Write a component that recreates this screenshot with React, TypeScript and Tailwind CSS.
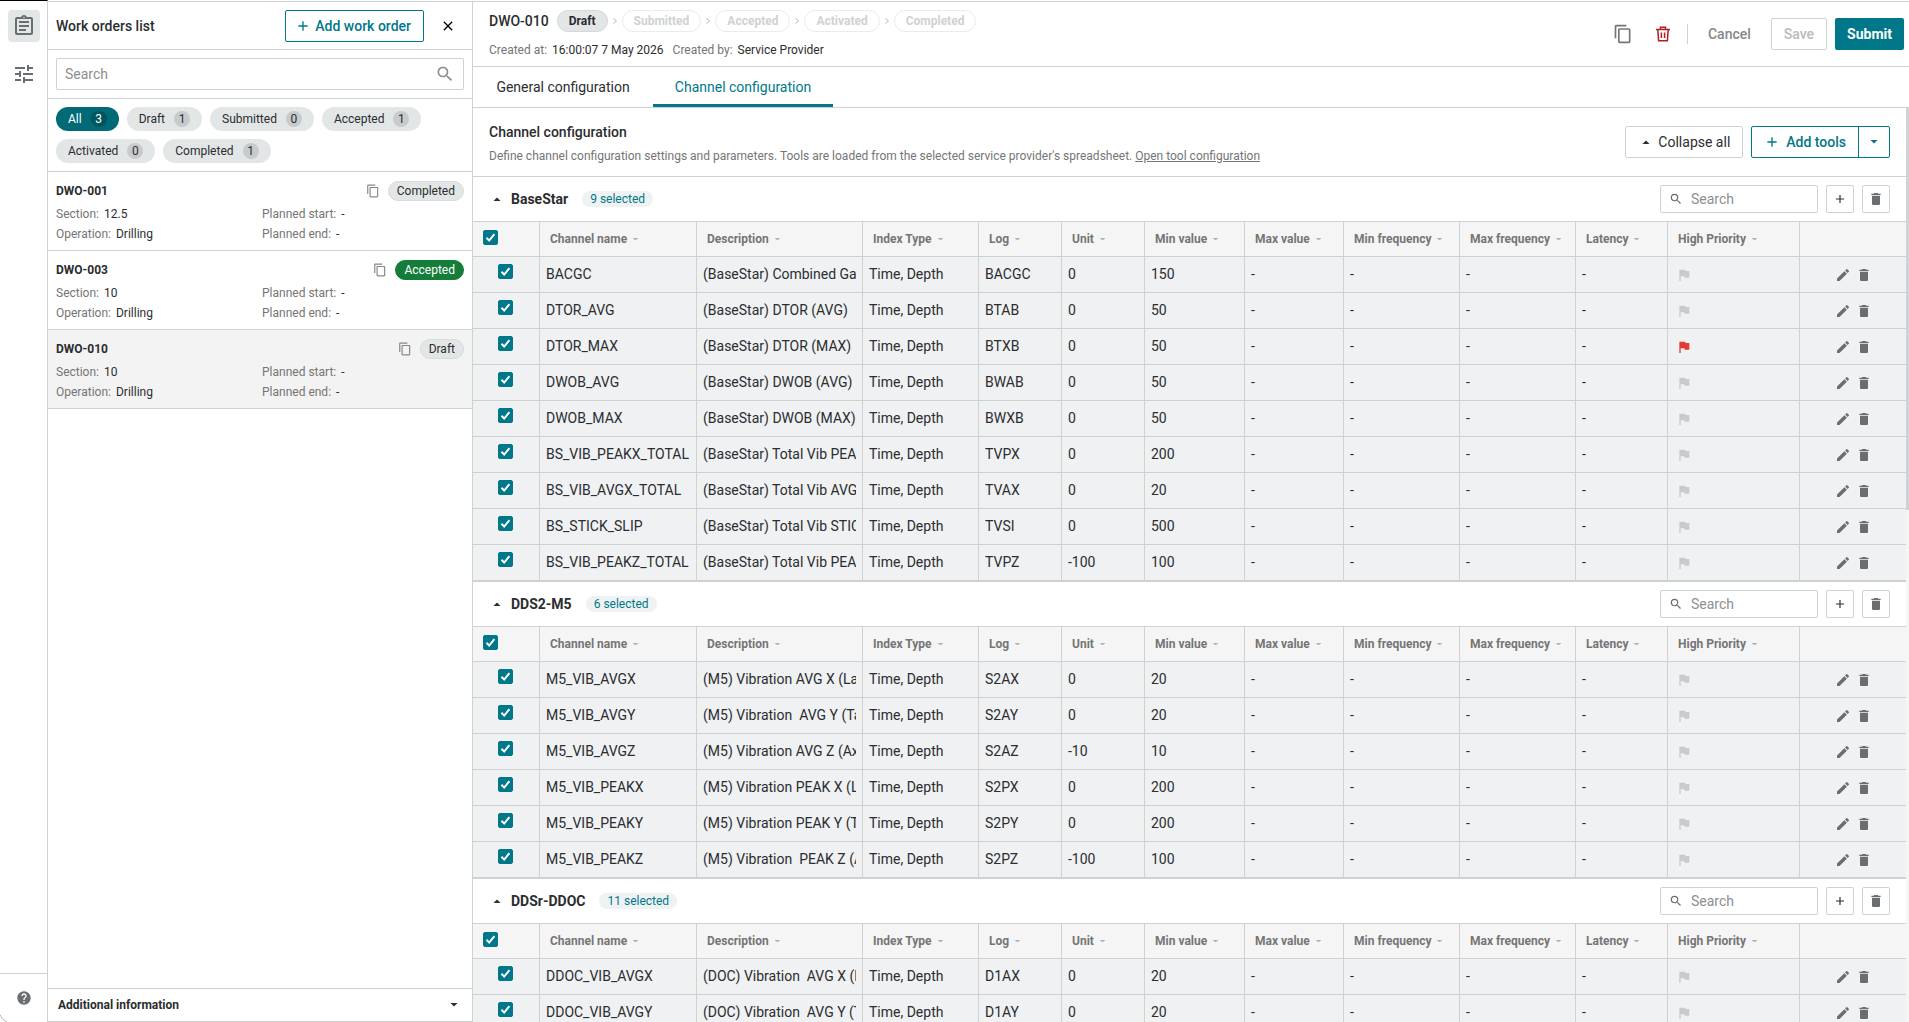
import { useState, type ReactNode } from "react";
import {
  MdAdd,
  MdClose,
  MdContentCopy,
  MdDelete,
  MdEdit,
  MdFlag,
  MdHelp,
  MdOutlineAssignment,
  MdSearch,
  MdTune,
} from "react-icons/md";
import clsx from "clsx";

type Channel = {
  name: string;
  description: string;
  log: string;
  unit: string;
  min: string;
  flagged?: boolean;
};

type Tool = { name: string; selected: number; channels: Channel[] };

const ch = (name: string, description: string, log: string, unit: string, min: string, flagged = false): Channel => ({
  name,
  description,
  log,
  unit,
  min,
  flagged,
});

const TOOLS: Tool[] = [
  {
    name: "BaseStar",
    selected: 9,
    channels: [
      ch("BACGC", "(BaseStar) Combined Gam", "BACGC", "0", "150"),
      ch("DTOR_AVG", "(BaseStar) DTOR (AVG)", "BTAB", "0", "50"),
      ch("DTOR_MAX", "(BaseStar) DTOR (MAX)", "BTXB", "0", "50", true),
      ch("DWOB_AVG", "(BaseStar) DWOB (AVG)", "BWAB", "0", "50"),
      ch("DWOB_MAX", "(BaseStar) DWOB (MAX)", "BWXB", "0", "50"),
      ch("BS_VIB_PEAKX_TOTAL", "(BaseStar) Total Vib PEAKX", "TVPX", "0", "200"),
      ch("BS_VIB_AVGX_TOTAL", "(BaseStar) Total Vib AVGX", "TVAX", "0", "20"),
      ch("BS_STICK_SLIP", "(BaseStar) Total Vib STICK", "TVSI", "0", "500"),
      ch("BS_VIB_PEAKZ_TOTAL", "(BaseStar) Total Vib PEAKZ", "TVPZ", "-100", "100"),
    ],
  },
  {
    name: "DDS2-M5",
    selected: 6,
    channels: [
      ch("M5_VIB_AVGX", "(M5) Vibration AVG X (Lat)", "S2AX", "0", "20"),
      ch("M5_VIB_AVGY", "(M5) Vibration  AVG Y (Tan)", "S2AY", "0", "20"),
      ch("M5_VIB_AVGZ", "(M5) Vibration AVG Z (Ax)", "S2AZ", "-10", "10"),
      ch("M5_VIB_PEAKX", "(M5) Vibration PEAK X (Lat)", "S2PX", "0", "200"),
      ch("M5_VIB_PEAKY", "(M5) Vibration PEAK Y (Tan)", "S2PY", "0", "200"),
      ch("M5_VIB_PEAKZ", "(M5) Vibration  PEAK Z (Ax)", "S2PZ", "-100", "100"),
    ],
  },
  {
    name: "DDSr-DDOC",
    selected: 11,
    channels: [
      ch("DDOC_VIB_AVGX", "(DOC) Vibration  AVG X (La", "D1AX", "0", "20"),
      ch("DDOC_VIB_AVGY", "(DOC) Vibration  AVG Y (Ta", "D1AY", "0", "20"),
    ],
  },
];

const COLUMNS = [
  { label: "Channel name", width: "w-[157px]" },
  { label: "Description", width: "" },
  { label: "Index Type", width: "w-[116px]" },
  { label: "Log", width: "w-[83px]" },
  { label: "Unit", width: "w-[83px]" },
  { label: "Min value", width: "w-[100px]" },
  { label: "Max value", width: "w-[99px]" },
  { label: "Min frequency", width: "w-[116px]" },
  { label: "Max frequency", width: "w-[116px]" },
  { label: "Latency", width: "w-[92px]" },
  { label: "High Priority", width: "w-[132px]" },
];

const FILTERS = [
  { label: "All", count: 3 },
  { label: "Draft", count: 1 },
  { label: "Submitted", count: 0 },
  { label: "Accepted", count: 1 },
  { label: "Activated", count: 0 },
  { label: "Completed", count: 1 },
];

const ORDERS = [
  { id: "DWO-001", status: "Completed", section: "12.5" },
  { id: "DWO-003", status: "Accepted", section: "10" },
  { id: "DWO-010", status: "Draft", section: "10" },
];

const STEPS = ["Draft", "Submitted", "Accepted", "Activated", "Completed"];

function Caret({ up = false, className = "h-1 w-2" }: { up?: boolean; className?: string }) {
  return (
    <svg viewBox="0 0 8 4" fill="currentColor" className={clsx("shrink-0", className)} aria-hidden="true">
      <path d={up ? "M0.5 4L4 0.5L7.5 4Z" : "M0.5 0L4 3.5L7.5 0Z"} />
    </svg>
  );
}

function SortCaret() {
  return (
    <svg viewBox="0 0 5 2" fill="currentColor" className="h-0.5 w-[5px] shrink-0 text-[#b0b3b5]" aria-hidden="true">
      <path d="M0 0H5V0.6L3 2H2L0 0.6Z" />
    </svg>
  );
}

function TrashOutline() {
  return (
    <svg viewBox="0 0 16 16" fill="none" stroke="currentColor" strokeWidth="1.5" className="size-4" aria-hidden="true">
      <path d="M1 3.5H15M5.5 3V1.2H10.5V3M2.8 3.5L3.6 14.8H12.4L13.2 3.5M6.4 6.5V12M9.6 6.5V12" />
    </svg>
  );
}

function Checkbox({ label }: { label: string }) {
  const [checked, setChecked] = useState(true);
  return (
    <span className="relative block size-[15px]">
      <input
        type="checkbox"
        aria-label={label}
        checked={checked}
        onChange={() => setChecked(!checked)}
        className="block size-[15px] appearance-none rounded-xs border border-[#00788a] bg-white checked:bg-[#00788a]"
      />
      {checked && (
        <svg viewBox="0 0 15 15" fill="none" className="pointer-events-none absolute inset-0 size-[15px]" aria-hidden="true">
          <path d="M3.5 7.8L6.2 10.6L11.4 4.2" stroke="white" strokeWidth="2" />
        </svg>
      )}
    </span>
  );
}

function Field({ label, children }: { label: string; children: ReactNode }) {
  return (
    <div className="flex gap-[5px] text-xs leading-5">
      <dt className="text-[#757575]">{label}:</dt>
      <dd>{children}</dd>
    </div>
  );
}

function Rail() {
  return (
    <nav className="relative flex w-12 shrink-0 flex-col border-t border-r border-t-black border-r-[#cfd2d3] text-[#6b6e70]">
      <div className="flex flex-1 flex-col items-center gap-4 pt-[9px]">
        <button type="button" aria-label="Work orders" className="flex size-8 items-center justify-center rounded bg-[#e3e6e7]">
          <MdOutlineAssignment className="size-6" />
        </button>
        <button type="button" aria-label="Settings" className="flex size-8 items-center justify-center rounded">
          <MdTune className="size-6" />
        </button>
      </div>
      <div className="flex h-[49px] items-center justify-center border-t border-[#cfd2d3]">
        <button type="button" aria-label="Help">
          <MdHelp className="size-4" />
        </button>
      </div>
      <svg viewBox="0 0 8 8" fill="none" stroke="#b5b8ba" className="absolute bottom-0 left-0 size-2" aria-hidden="true">
        <path d="M0 0.5Q1.5 6 7 8" />
      </svg>
    </nav>
  );
}

function OrderCard({ id, status, section, active }: { id: string; status: string; section: string; active: boolean }) {
  return (
    <li className={clsx("border-b border-[#cfd2d3] px-2 pt-[9px] pb-[6px]", active && "bg-[#f3f3f3]")}>
      <div className="mb-[3px] flex h-5 items-center">
        <h3 className="flex-1 text-xs font-bold">{id}</h3>
        <button type="button" aria-label={`Copy ${id}`} className="mr-2 text-[#85888a]">
          <MdContentCopy className="size-[14px]" />
        </button>
        <span
          className={clsx(
            "flex h-5 items-center rounded-full border px-2 text-xs",
            status === "Accepted" ? "border-[#147d3a] bg-[#147d3a] text-white" : "border-[#d8dbdc] bg-[#e3e6e7]",
          )}
        >
          {status}
        </span>
      </div>
      <dl className="grid grid-cols-2 gap-x-1">
        <Field label="Section">{section}</Field>
        <Field label="Planned start">-</Field>
        <Field label="Operation">Drilling</Field>
        <Field label="Planned end">-</Field>
      </dl>
    </li>
  );
}

function Sidebar() {
  const [filter, setFilter] = useState("All");
  return (
    <aside className="mt-px flex w-[425px] shrink-0 flex-col border-t border-r border-b border-[#cfd2d3]">
      <header className="flex h-12 shrink-0 items-center border-b border-[#cfd2d3] px-2">
        <h2 className="flex-1 text-sm font-medium">Work orders list</h2>
        <button
          type="button"
          className="flex h-8 items-center gap-1 rounded-xs border border-[#00788a] pr-3 pl-[9px] text-sm font-medium text-[#00788a]"
        >
          <MdAdd className="size-4" />
          Add work order
        </button>
        <button type="button" aria-label="Close" className="ml-2 flex size-8 items-center justify-center text-black">
          <MdClose className="size-4" />
        </button>
      </header>
      <div className="border-b border-[#cfd2d3] p-2">
        <label className="flex h-8 items-center rounded-xs border border-[#cfd2d3] px-2">
          <input
            type="text"
            aria-label="Search work orders"
            placeholder="Search"
            className="min-w-0 flex-1 text-sm outline-none placeholder:text-[#8c8f91]"
          />
          <MdSearch className="size-5 text-[#8c8f91]" />
        </label>
      </div>
      <div className="flex flex-wrap gap-2 border-b border-[#cfd2d3] p-2">
        {FILTERS.map(({ label, count }) => (
          <button
            key={label}
            type="button"
            onClick={() => setFilter(label)}
            className={clsx(
              "flex h-6 items-center gap-[9px] rounded-full px-3 text-xs",
              filter === label ? "bg-[#006a75] text-white" : "bg-[#e3e6e7]",
            )}
          >
            {label}
            <span
              className={clsx(
                "flex size-4 items-center justify-center rounded-full",
                filter === label ? "bg-[#00545d]" : "bg-[#c8cbcc]",
              )}
            >
              {count}
            </span>
          </button>
        ))}
      </div>
      <ul className="flex-1">
        {ORDERS.map((order) => (
          <OrderCard key={order.id} {...order} active={order.id === "DWO-010"} />
        ))}
      </ul>
      <button
        type="button"
        className="flex h-[33px] shrink-0 items-center justify-between border-t border-[#cfd2d3] pr-[14px] pl-[10px] text-xs font-bold"
      >
        Additional information
        <Caret />
      </button>
    </aside>
  );
}

function OrderHeader() {
  return (
    <header className="flex h-[65px] shrink-0 items-center justify-between border-b border-[#cfd2d3] pr-[5px] pl-4">
      <div className="pt-0.5">
        <div className="flex items-center">
          <h1 className="mr-2 text-sm font-medium">DWO-010</h1>
          <ol className="flex items-center">
            {STEPS.map((step, i) => (
              <li key={step} className="flex items-center">
                {i > 0 && (
                  <svg viewBox="0 0 14 8" fill="none" stroke="#b5b8ba" className="h-2 w-[14px]" aria-hidden="true">
                    <path d="M5.5 1.5L8.5 4L5.5 6.5" />
                  </svg>
                )}
                <span
                  className={clsx(
                    "flex h-[22px] items-center rounded-full border px-[11px] text-xs font-bold",
                    i === 0 ? "border-[#d5d8d9] bg-[#e3e6e7]" : "border-[#e9ebec] text-[#cfd2d3]",
                  )}
                >
                  {step}
                </span>
              </li>
            ))}
          </ol>
        </div>
        <dl className="mt-2 flex gap-[9px]">
          <Field label="Created at">16:00:07 7 May 2026</Field>
          <Field label="Created by">Service Provider</Field>
        </dl>
      </div>
      <div className="flex items-center text-sm font-medium">
        <button type="button" aria-label="Copy work order" className="flex size-8 items-center justify-center text-[#757575]">
          <MdContentCopy className="size-5" />
        </button>
        <button type="button" aria-label="Delete work order" className="ml-2 flex size-8 items-center justify-center text-[#b71c1c]">
          <TrashOutline />
        </button>
        <span className="ml-2 h-5 border-l border-[#cfd2d3]" />
        <button type="button" className="h-8 px-5 text-[#85888a]">
          Cancel
        </button>
        <button type="button" disabled className="h-8 rounded-xs border border-[#cfd2d3] px-3 text-[#b8bbbd]">
          Save
        </button>
        <button type="button" className="ml-2 h-8 rounded-xs bg-[#00788a] px-3 font-bold text-white">
          Submit
        </button>
      </div>
    </header>
  );
}

function ToolTable({ tool }: { tool: Tool }) {
  return (
    <table className="w-full table-fixed border-separate border-spacing-0 border-b border-[#cfd2d3] text-left">
      <thead>
        <tr className="h-[35px] bg-[#f5f5f5] text-xs text-[#757575] *:border-b *:border-[#cfd2d3]">
          <th className="w-[67px] border-r pb-[3px] pl-[10px]">
            <Checkbox label={`Select all ${tool.name} channels`} />
          </th>
          {COLUMNS.map(({ label, width }) => (
            <th key={label} className={clsx("border-r pl-[10px] font-bold", width)}>
              <span className="flex items-center gap-[6px] whitespace-nowrap">
                {label}
                <SortCaret />
              </span>
            </th>
          ))}
          <th className="w-[106px]" aria-label="Actions" />
        </tr>
      </thead>
      <tbody>
        {tool.channels.map((row) => (
          <tr key={row.name} className="h-9 bg-[#eff1f3] text-sm *:border-b *:border-[#cfd2d3]">
            <td className="border-r pb-[6px] pl-[25px]">
              <Checkbox label={`Select ${row.name}`} />
            </td>
            {[row.name, row.description, "Time, Depth", row.log, row.unit, row.min, "-", "-", "-", "-"].map((value, i) => (
              <td key={i} className="border-r px-[6px] pb-0.5">
                <div className="overflow-hidden whitespace-pre">{value}</div>
              </td>
            ))}
            <td className="border-r pl-2">
              <button
                type="button"
                aria-label={`High priority ${row.name}`}
                className={clsx("block", row.flagged ? "text-[#e53935]" : "text-[#c8cacc]")}
              >
                <MdFlag className="size-4" />
              </button>
            </td>
            <td>
              <div className="flex justify-center gap-[5px] text-[#6b6e70]">
                <button type="button" aria-label={`Edit ${row.name}`}>
                  <MdEdit className="size-4" />
                </button>
                <button type="button" aria-label={`Delete ${row.name}`}>
                  <MdDelete className="size-4" />
                </button>
              </div>
            </td>
          </tr>
        ))}
      </tbody>
    </table>
  );
}

function ToolSection({ tool }: { tool: Tool }) {
  const [open, setOpen] = useState(true);
  return (
    <section>
      <div className="flex h-[45px] items-center gap-2 border-b border-[#cfd2d3] pr-4 pl-5">
        <button type="button" onClick={() => setOpen(!open)} className="flex flex-1 items-center text-sm font-bold">
          <Caret up={open} className="mr-[10px] h-1 w-2" />
          {tool.name}
          <span className="ml-[14px] rounded-full bg-[#eff2f3] px-2 text-xs leading-4 font-normal text-[#00788a]">
            {tool.selected} selected
          </span>
        </button>
        <label className="flex h-7 w-[158px] items-center gap-2 rounded-xs border border-[#cfd2d3] px-2">
          <MdSearch className="size-[14px] shrink-0 text-[#6b6e70]" />
          <input
            type="text"
            aria-label={`Search ${tool.name} channels`}
            placeholder="Search"
            className="min-w-0 flex-1 text-sm outline-none placeholder:text-[#8c8f91]"
          />
        </label>
        <button
          type="button"
          aria-label={`Add channel to ${tool.name}`}
          className="flex size-7 items-center justify-center rounded-xs border border-[#cfd2d3] text-[#2b2d2f]"
        >
          <MdAdd className="size-[14px]" />
        </button>
        <button
          type="button"
          aria-label={`Delete ${tool.name}`}
          className="flex size-7 items-center justify-center rounded-xs border border-[#cfd2d3] text-[#6b6e70]"
        >
          <MdDelete className="size-4" />
        </button>
      </div>
      {open && <ToolTable tool={tool} />}
    </section>
  );
}

export default function App() {
  return (
    <div className="flex h-screen overflow-hidden bg-white font-[Roboto,sans-serif] text-[#2b2d2f]">
      <Rail />
      <Sidebar />
      <main className="mt-px flex min-w-0 flex-1 flex-col border-t border-[#cfd2d3]">
        <OrderHeader />
        <div className="flex h-[41px] shrink-0 border-b border-[#cfd2d3] text-sm" role="tablist">
          <button type="button" role="tab" aria-selected="false" className="w-[180px]">
            General configuration
          </button>
          <button
            type="button"
            role="tab"
            aria-selected="true"
            className="w-[180px] border-b-3 border-[#00788a] pt-[3px] text-[#00788a]"
          >
            Channel configuration
          </button>
        </div>
        <div className="flex min-h-0 flex-1">
          <div className="min-w-0 flex-1 overflow-hidden">
            <div className="flex h-[69px] items-center justify-between border-b border-[#cfd2d3] px-4">
              <div className="pt-1">
                <h2 className="text-sm font-medium">Channel configuration</h2>
                <p className="mt-1 text-xs leading-5 text-[#757575]">
                  Define channel configuration settings and parameters. Tools are loaded from the selected service
                  provider's spreadsheet.{" "}
                  <a href="#tools" className="underline">
                    Open tool configuration
                  </a>
                </p>
              </div>
              <div className="flex gap-2 text-sm">
                <button type="button" className="flex h-8 items-center gap-1 rounded-xs border border-[#cfd2d3] px-3">
                  <span className="flex w-4 justify-center">
                    <Caret up />
                  </span>
                  Collapse all
                </button>
                <div className="flex h-8 rounded-xs border border-[#00788a] font-medium text-[#00788a]">
                  <button type="button" className="flex items-center gap-[6px] px-3">
                    <MdAdd className="size-4" />
                    Add tools
                  </button>
                  <button
                    type="button"
                    aria-label="More add options"
                    className="flex w-[31px] items-center justify-center border-l border-[#00788a]"
                  >
                    <Caret />
                  </button>
                </div>
              </div>
            </div>
            {TOOLS.map((tool) => (
              <ToolSection key={tool.name} tool={tool} />
            ))}
          </div>
          <div className="w-[3px] shrink-0 bg-[#f5f5f5]">
            <div className="h-[44%] bg-[#cfd3d6]" />
          </div>
        </div>
      </main>
    </div>
  );
}
